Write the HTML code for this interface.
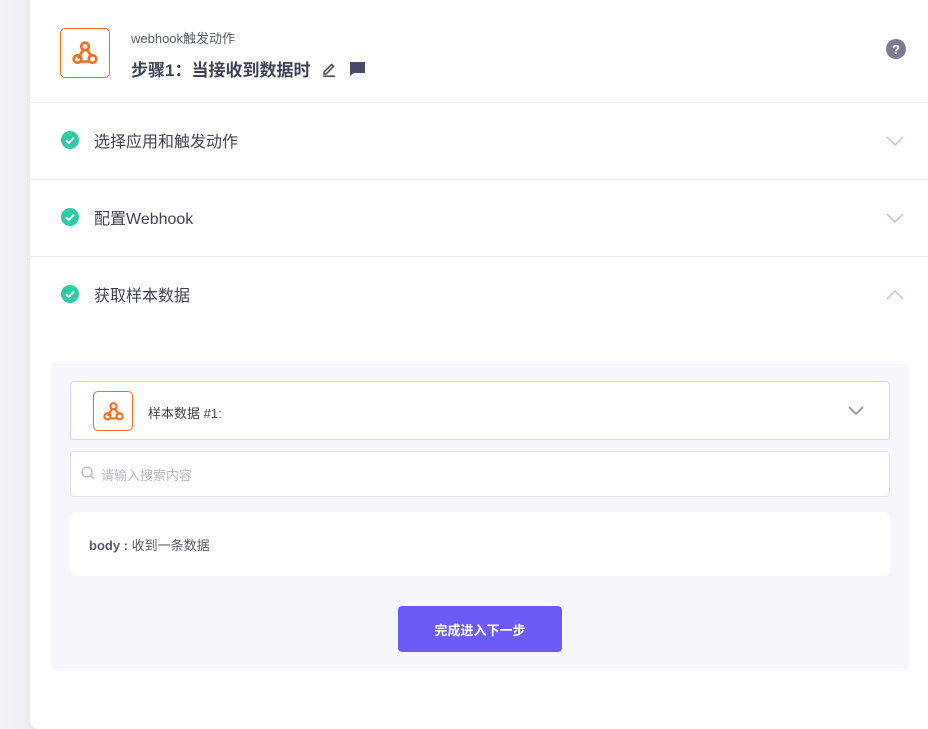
<!DOCTYPE html>
<html><head><meta charset="utf-8"><style>
*{box-sizing:border-box;margin:0;padding:0}
body{width:928px;height:729px;overflow:hidden;background:linear-gradient(90deg,#f3f4f8,#eceef3 30px);font-family:"Liberation Sans","Noto Sans CJK SC",sans-serif;position:relative}
.card{position:absolute;left:30px;top:-10px;width:920px;height:739px;background:#fff;border-radius:8px;box-shadow:0 0 6px rgba(0,0,0,.05)}
.hdr{position:absolute;left:0;top:10px;width:898px;height:103px;border-bottom:1px solid #ebebef}
.logo{position:absolute;left:30px;top:28px;width:50px;height:50px;border:1px solid #ff6a1a;border-radius:5px;display:flex;align-items:center;justify-content:center}
.sub{position:absolute;left:101px;top:28px;font-size:13px;color:#555a6b}
.title{position:absolute;left:101px;top:56px;font-size:17px;font-weight:bold;color:#3f4254;display:flex;align-items:center}
.help{position:absolute;left:856px;top:39px}
.row{position:absolute;left:0;width:898px;height:77px;border-bottom:1px solid #ebebef}
.row .ck{position:absolute;left:31px;top:28px}
.row .t{position:absolute;left:64px;top:25px;font-size:16px;color:#3f4254}
.row .ch{position:absolute;left:856px;top:33px}
.panel{position:absolute;left:20px;top:371px;width:860px;height:310px;background:#f7f6fd;border-radius:8px}
.sel{position:absolute;left:20px;top:20px;width:820px;height:59px;background:#fff;border:1px solid #d9d4f5;border-radius:4px}
.srch{position:absolute;left:20px;top:90px;width:820px;height:46px;background:#fff;border:1px solid #e3e3ea;border-radius:4px}
.body{position:absolute;left:20px;top:151px;width:820px;height:64px;background:#fff;border-radius:6px;font-size:13px;color:#555a6b}
.btn{position:absolute;left:348px;top:245px;width:164px;height:46px;background:#6c5cf5;border-radius:4px;color:#fff;font-size:13px;font-weight:bold;display:flex;align-items:center;justify-content:center}
</style></head><body>
<div class="card">
 <div class="hdr">
  <div class="logo"><svg width="26" height="26" viewBox="0 0 26 26" fill="none" stroke="#ff6a1a" stroke-width="2.6" stroke-linecap="round"><circle cx="13" cy="6.5" r="3.8"/><circle cx="5.5" cy="19" r="3.8"/><circle cx="20.5" cy="19" r="3.8"/><path d="M11 10 L6.5 17.5"/><path d="M9 21.5 H17"/><path d="M15 10 L19.5 16"/></svg></div>
  <div class="sub">webhook触发动作</div>
  <div class="title">步骤1：当接收到数据时
   <svg style="margin-left:11px" width="16" height="16" viewBox="0 0 16 16" fill="none" stroke="#3f4254" stroke-width="1.5"><path d="M3 11 L10.5 3.5 L12.5 5.5 L5 13 H3 Z"/><path d="M2 15.2 H14"/></svg>
   <svg style="margin-left:12px" width="17" height="16" viewBox="0 0 17 16"><path d="M1 1 H16 V12 H5 L1 15 Z" fill="#4a4a6a"/></svg>
  </div>
  <svg class="help" width="20" height="20" viewBox="0 0 20 20"><circle cx="10" cy="10" r="10" fill="#7d7b92"/><text x="10" y="15" text-anchor="middle" font-size="13" font-weight="bold" fill="#fff" font-family="Liberation Sans">?</text></svg>
 </div>
 <div class="row" style="top:113px"><svg class="ck" width="18" height="18" viewBox="0 0 18 18"><circle cx="9" cy="9" r="9" fill="#2fcba4"/><path d="M5 9.3 L7.8 12 L13 6.5" stroke="#fff" stroke-width="2" fill="none"/></svg><div class="t">选择应用和触发动作</div><svg class="ch" width="18" height="10" viewBox="0 0 18 10"><path d="M1 1 L9 9 L17 1" stroke="#b8c3d9" stroke-width="1.4" fill="none"/></svg></div>
 <div class="row" style="top:190px"><svg class="ck" width="18" height="18" viewBox="0 0 18 18"><circle cx="9" cy="9" r="9" fill="#2fcba4"/><path d="M5 9.3 L7.8 12 L13 6.5" stroke="#fff" stroke-width="2" fill="none"/></svg><div class="t">配置Webhook</div><svg class="ch" width="18" height="10" viewBox="0 0 18 10"><path d="M1 1 L9 9 L17 1" stroke="#b8c3d9" stroke-width="1.4" fill="none"/></svg></div>
 <div class="row" style="top:267px;border:none"><svg class="ck" width="18" height="18" viewBox="0 0 18 18"><circle cx="9" cy="9" r="9" fill="#2fcba4"/><path d="M5 9.3 L7.8 12 L13 6.5" stroke="#fff" stroke-width="2" fill="none"/></svg><div class="t">获取样本数据</div><svg class="ch" width="18" height="10" viewBox="0 0 18 10"><path d="M1 9 L9 1 L17 9" stroke="#b8c3d9" stroke-width="1.4" fill="none"/></svg></div>
 <div class="panel">
  <div class="sel">
   <div style="position:absolute;left:22px;top:9px;width:40px;height:40px;border:1px solid #ff6a1a;border-radius:5px;display:flex;align-items:center;justify-content:center"><svg width="21" height="21" viewBox="0 0 26 26" fill="none" stroke="#ff6a1a" stroke-width="2.6" stroke-linecap="round"><circle cx="13" cy="6.5" r="3.8"/><circle cx="5.5" cy="19" r="3.8"/><circle cx="20.5" cy="19" r="3.8"/><path d="M11 10 L6.5 17.5"/><path d="M9 21.5 H17"/><path d="M15 10 L19.5 16"/></svg></div>
   <div style="position:absolute;left:77px;top:21px;font-size:13px;color:#3f4254">样本数据 #1:</div>
   <svg style="position:absolute;left:777px;top:24px" width="16" height="10" viewBox="0 0 16 10"><path d="M1 1 L8 8 L15 1" stroke="#8a8fa3" stroke-width="1.6" fill="none"/></svg>
  </div>
  <div class="srch">
   <svg style="position:absolute;left:10px;top:14px" width="14" height="14" viewBox="0 0 14 14" fill="none" stroke="#b5b8c4" stroke-width="1.3"><circle cx="6" cy="6" r="5"/><path d="M9.8 9.8 L13 13"/></svg>
   <div style="position:absolute;left:30px;top:13px;font-size:13px;color:#b5b8c4">请输入搜索内容</div>
  </div>
  <div class="body"><div style="position:absolute;left:19px;top:23px"><b>body :</b> 收到一条数据</div></div>
  <div class="btn">完成进入下一步</div>
 </div>
</div>
</body></html>
